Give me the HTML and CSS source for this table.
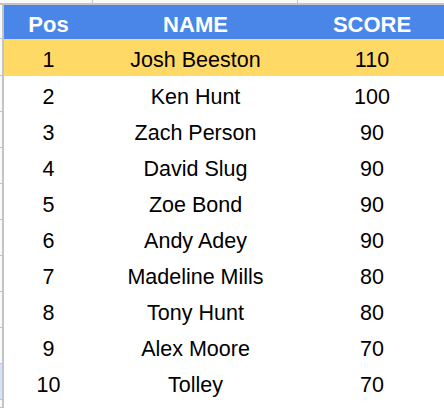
FILE: index.html
```html
<!DOCTYPE html>
<html>
<head>
<meta charset="utf-8">
<link rel="stylesheet" href="styles.css">
</head>
<body>
<div class="sheet">
  <div class="colheads">
    <div class="corner"></div>
    <div class="ch"></div>
    <div class="ch"></div>
    <div class="ch last"></div>
  </div>
  <div class="row head">
    <div class="rh"></div>
    <div class="c">Pos</div>
    <div class="c">NAME</div>
    <div class="c">SCORE</div>
  </div>
  <div class="row first">
    <div class="rh"></div>
    <div class="c">1</div>
    <div class="c">Josh Beeston</div>
    <div class="c">110</div>
  </div>
  <div class="row">
    <div class="rh"></div>
    <div class="c">2</div>
    <div class="c">Ken Hunt</div>
    <div class="c">100</div>
  </div>
  <div class="row">
    <div class="rh"></div>
    <div class="c">3</div>
    <div class="c">Zach Person</div>
    <div class="c">90</div>
  </div>
  <div class="row">
    <div class="rh"></div>
    <div class="c">4</div>
    <div class="c">David Slug</div>
    <div class="c">90</div>
  </div>
  <div class="row">
    <div class="rh"></div>
    <div class="c">5</div>
    <div class="c">Zoe Bond</div>
    <div class="c">90</div>
  </div>
  <div class="row">
    <div class="rh"></div>
    <div class="c">6</div>
    <div class="c">Andy Adey</div>
    <div class="c">90</div>
  </div>
  <div class="row">
    <div class="rh"></div>
    <div class="c">7</div>
    <div class="c">Madeline Mills</div>
    <div class="c">80</div>
  </div>
  <div class="row">
    <div class="rh"></div>
    <div class="c">8</div>
    <div class="c">Tony Hunt</div>
    <div class="c">80</div>
  </div>
  <div class="row">
    <div class="rh"></div>
    <div class="c">9</div>
    <div class="c">Alex Moore</div>
    <div class="c">70</div>
  </div>
  <div class="row">
    <div class="rh sel"></div>
    <div class="c">10</div>
    <div class="c">Tolley</div>
    <div class="c">70</div>
  </div>
  <div class="row tail">
    <div class="rh"></div>
    <div class="c"></div>
    <div class="c"></div>
    <div class="c"></div>
  </div>
</div>
</body>
</html>
```
FILE: styles.css
```css
html, body {
  margin: 0;
  padding: 0;
  background: #ffffff;
  overflow: hidden;
}

.sheet {
  width: 446px;
  font-family: "Liberation Sans", Arial, sans-serif;
  color: #000000;
}

.colheads {
  display: grid;
  grid-template-columns: 4px 89px 205px 148px;
  height: 3px;
  border-bottom: 2px solid #c4c4c4;
  background: #f8f9fa;
}

.colheads .ch {
  border-right: 1px solid #c4c4c4;
}

.row {
  display: grid;
  grid-template-columns: 4px 89px 205px 148px;
  height: 36px;
  font-size: 21.5px;
}

.row .rh {
  width: 2px;
  border-right: 2px solid #c4c4c4;
  background: #f8f9fa;
  box-shadow: inset 0 -1px 0 #c4c4c4;
}

.row .rh.sel {
  background: #d3e3fd;
}

.row .c {
  display: flex;
  align-items: center;
  justify-content: center;
  padding-top: 6px;
  box-sizing: border-box;
  white-space: nowrap;
}

.row.head {
  height: 34px;
  background: #4a86e8;
  color: #ffffff;
  font-weight: bold;
  font-size: 22px;
}

.row.head .c {
  padding-top: 6px;
}

.row.first {
  height: 37px;
  background: #ffd966;
}

.row.tail {
  height: 8px;
}
```
